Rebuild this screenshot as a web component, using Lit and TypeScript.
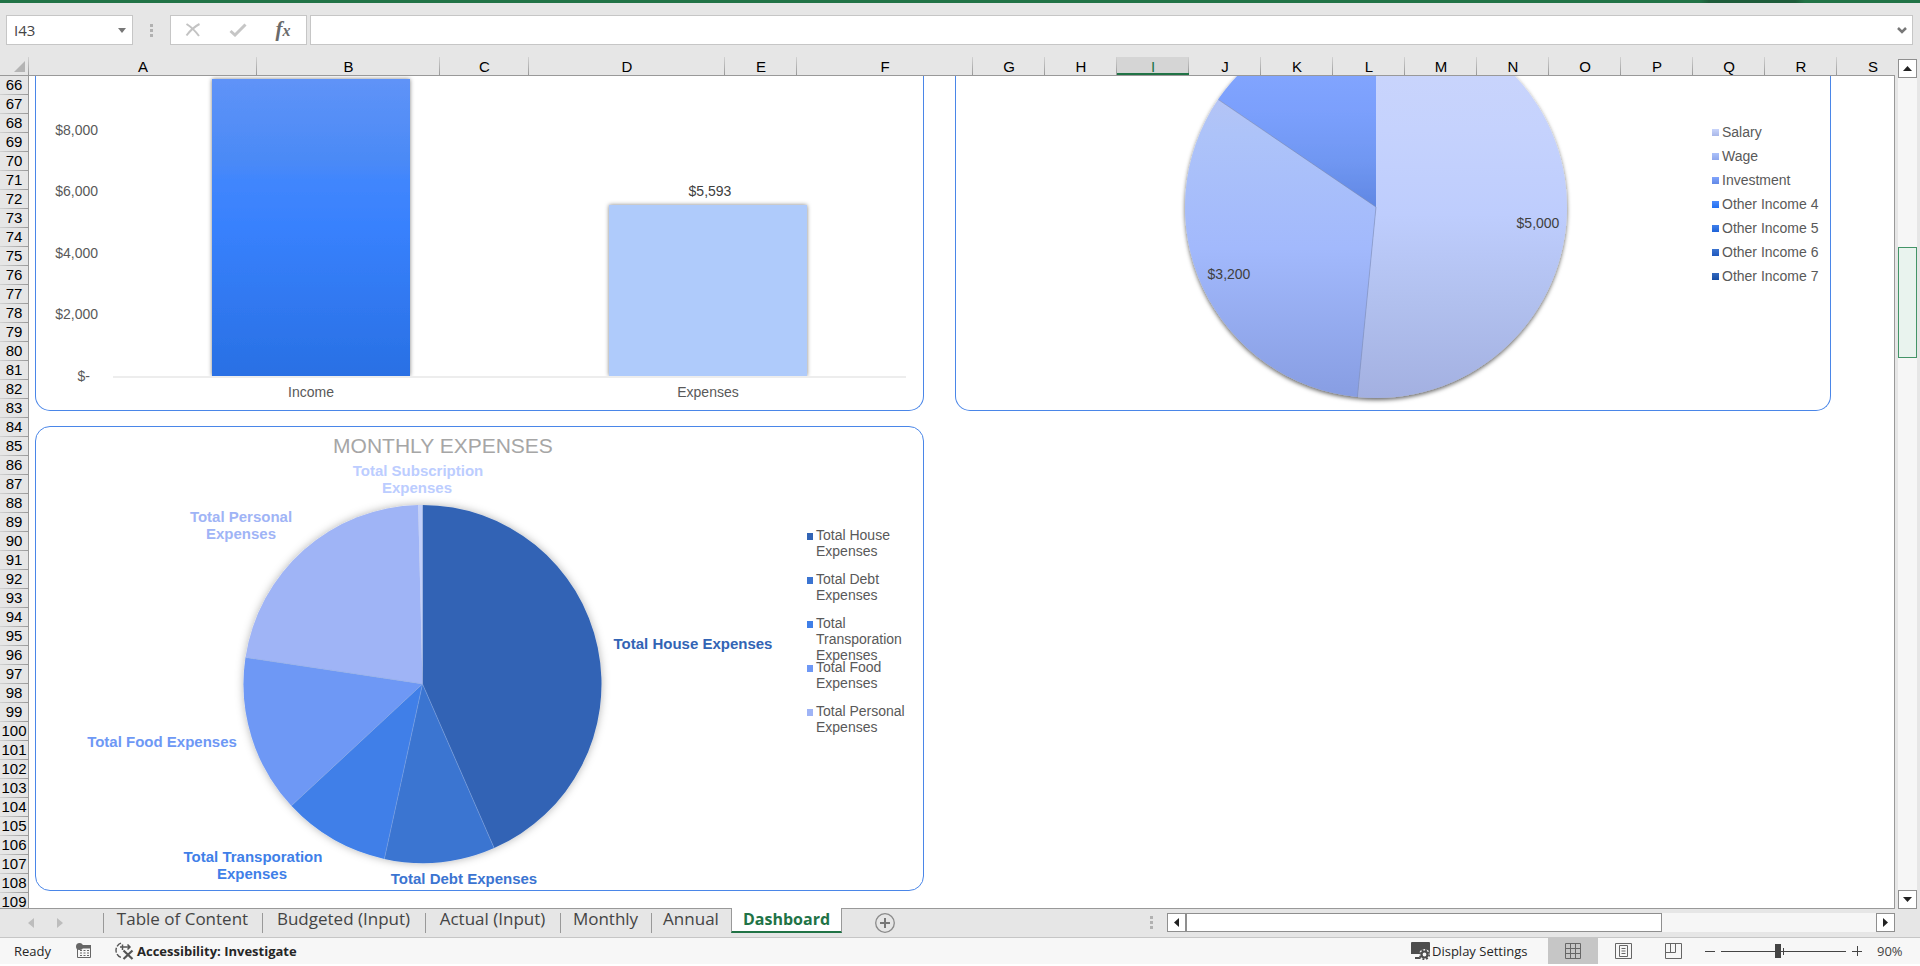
import { LitElement, html, svg, css } from "lit";
import { customElement } from "lit/decorators.js";
import { styleMap } from "lit/directives/style-map.js";

const COLUMNS: [string, number][] = [
  ["A", 228], ["B", 183], ["C", 89], ["D", 196], ["E", 72], ["F", 176],
  ...("GHIJKLMNOPQRS".split("").map((c) => [c, 72]) as [string, number][]),
];
const ROWS = Array.from({ length: 44 }, (_, i) => 66 + i);
const SELECTED_COLUMN = "I";

const TABS: [string, number][] = [
  ["Table of Content", 159],
  ["Budgeted (Input)", 163],
  ["Actual (Input)", 135],
  ["Monthly", 91],
  ["Annual", 80],
  ["Dashboard", 111],
];

/** Wedge from angle a to angle b, in degrees clockwise from twelve o'clock. */
function wedge(cx: number, cy: number, r: number, a: number, b: number) {
  const at = (deg: number) => {
    const t = (deg * Math.PI) / 180;
    return `${(cx + r * Math.sin(t)).toFixed(2)} ${(cy - r * Math.cos(t)).toFixed(2)}`;
  };
  return `M${cx} ${cy}L${at(a)}A${r} ${r} 0 ${b - a > 180 ? 1 : 0} 1 ${at(b)}Z`;
}

@customElement("income-expense-chart")
class IncomeExpenseChart extends LitElement {
  static styles = css`
    :host { display: block; }
    .plot { display: block; font: 14px "Liberation Sans", Arial, sans-serif; }
    .axis { fill: #595959; }
    .value { fill: #404040; }
    .end { text-anchor: end; }
    .mid { text-anchor: middle; }
  `;
  render() {
    const ticks: [string, number][] = [["$8,000", 135], ["$6,000", 196], ["$4,000", 258], ["$2,000", 319]];
    return html`
      <svg class="plot" width="887" height="334" viewBox="36 76 887 334" role="img" aria-label="Income and expenses">
        <defs>
          <linearGradient id="inc" x1="0" y1="0" x2="0" y2="1">
            <stop offset="0" stop-color="#5f93f8" />
            <stop offset=".27" stop-color="#4b8af6" />
            <stop offset=".34" stop-color="#4186fd" />
            <stop offset=".5" stop-color="#3881fd" />
            <stop offset="1" stop-color="#2970e4" />
          </linearGradient>
          <filter id="sh" x="-10%" y="-10%" width="120%" height="120%">
            <feDropShadow dx="0" dy="0" stdDeviation="2" flood-color="#000" flood-opacity=".5" />
          </filter>
          <clipPath id="floor"><rect x="36" y="60" width="887" height="316" /></clipPath>
        </defs>
        <rect x="113" y="376" width="793" height="2" fill="#ededed" />
        <g clip-path="url(#floor)">
          <rect x="212" y="79" width="198" height="297" fill="url(#inc)" filter="url(#sh)" />
          <rect x="609" y="205" width="198" height="171" fill="#afcbfb" filter="url(#sh)" />
        </g>
        ${ticks.map(([t, y]) => svg`<text class="axis end" x="98" y=${y}>${t}</text>`)}
        <text class="axis end" x="90" y="381">$-</text>
        <text class="axis mid" x="311" y="397">Income</text>
        <text class="axis mid" x="708" y="397">Expenses</text>
        <text class="value mid" x="710" y="196">$5,593</text>
      </svg>
    `;
  }
}

const legendStyles = css`
  .legend {
    list-style: none;
    margin: 0;
    padding: 0;
    font: 14px/16px "Liberation Sans", Arial, sans-serif;
    color: #595959;
  }
  .swatch { flex: none; width: 7px; height: 7px; }
`;

@customElement("income-source-chart")
class IncomeSourceChart extends LitElement {
  static styles = [
    legendStyles,
    css`
      :host { display: flex; }
      .plot { display: block; flex: none; font: 14px "Liberation Sans", Arial, sans-serif; fill: #404040; }
      .legend { padding-top: 44px; }
      .entry { display: flex; align-items: center; gap: 3px; height: 24px; white-space: nowrap; }
      .mid { text-anchor: middle; }
    `,
  ];
  render() {
    const legend: [string, string, string][] = [
      ["Salary", "#c8d4fb", "#a9b7e8"],
      ["Wage", "#abc1fa", "#8fa7ec"],
      ["Investment", "#80a4fd", "#6289e5"],
      ["Other Income 4", "#4c8bfb", "#216ff0"],
      ["Other Income 5", "#3f80ec", "#1f63d8"],
      ["Other Income 6", "#3c74d0", "#1f58bd"],
      ["Other Income 7", "#346abf", "#174da4"],
    ];
    return html`
      <svg class="plot" width="756" height="334" viewBox="956 76 756 334" role="img" aria-label="Income by source">
        <defs>
          <linearGradient id="sal" gradientUnits="userSpaceOnUse" x1="0" y1="15" x2="0" y2="399">
            <stop offset="0" stop-color="#ccd6fb" />
            <stop offset=".3" stop-color="#c5d2fd" />
            <stop offset=".52" stop-color="#becdfd" />
            <stop offset=".75" stop-color="#b1c0ee" />
            <stop offset="1" stop-color="#a3b0e1" />
          </linearGradient>
          <linearGradient id="wag" gradientUnits="userSpaceOnUse" x1="0" y1="99" x2="0" y2="399">
            <stop offset="0" stop-color="#b4c4f5" />
            <stop offset=".12" stop-color="#adc3f9" />
            <stop offset=".5" stop-color="#a2b9fc" />
            <stop offset="1" stop-color="#879de2" />
          </linearGradient>
          <linearGradient id="inv" gradientUnits="userSpaceOnUse" x1="0" y1="76" x2="0" y2="207">
            <stop offset="0" stop-color="#81a4fe" />
            <stop offset=".3" stop-color="#7a9ffc" />
            <stop offset=".65" stop-color="#7097f2" />
            <stop offset="1" stop-color="#6087e3" />
          </linearGradient>
          <filter id="sh" x="-10%" y="-10%" width="120%" height="120%">
            <feDropShadow dx="0" dy="2" stdDeviation="2" flood-color="#000" flood-opacity=".6" />
          </filter>
        </defs>
        <g filter="url(#sh)">
          <path d=${wedge(1376, 207, 191, 0, 185.57)} fill="url(#sal)" />
          <path d=${wedge(1376, 207, 191, 185.57, 304.3)} fill="url(#wag)" />
          <path d=${wedge(1376, 207, 191, 304.3, 360)} fill="url(#inv)" />
        </g>
        <path d="M1376 207L1357.4 397M1376 207L1218.2 99.500" stroke="#7f8fbe" stroke-opacity=".6" fill="none" />
        <text class="mid" x="1538" y="228">$5,000</text>
        <text class="mid" x="1229" y="279">$3,200</text>
      </svg>
      <ul class="legend">
        ${legend.map(
          ([name, a, b]) => html`<li class="entry">
            <span class="swatch" style=${styleMap({ background: `linear-gradient(${a}, ${b})` })}></span>${name}
          </li>`
        )}
      </ul>
    `;
  }
}

@customElement("monthly-expenses-chart")
class MonthlyExpensesChart extends LitElement {
  static styles = [
    legendStyles,
    css`
      :host { display: flex; }
      .plot { display: block; flex: none; font: bold 15px "Liberation Sans", Arial, sans-serif; text-anchor: middle; }
      .title { font-size: 21px; font-weight: normal; fill: #a6a6a6; }
      .legend { padding-top: 100px; }
      .entry { display: flex; gap: 3px; height: 44px; }
      .swatch { margin-top: 6px; width: 6px; }
      .name { width: 91px; }
    `,
  ];
  render() {
    const slices: [string, number, number][] = [
      ["#3264b5", 0, 156.4],
      ["#3b74d1", 156.4, 192.3],
      ["#3f7fe8", 192.3, 227.1],
      ["#6e98f5", 227.1, 278.5],
      ["#9fb4f6", 278.5, 358.6],
      ["#c2d0fb", 358.6, 360],
    ];
    const labels: [string, number, number, string][] = [
      ["Total Subscription", 418, 476, "#bccdff"],
      ["Expenses", 417, 493, "#bccdff"],
      ["Total Personal", 241, 522, "#9fb4f6"],
      ["Expenses", 241, 539, "#9fb4f6"],
      ["Total House Expenses", 693, 649, "#3264b5"],
      ["Total Food Expenses", 162, 747, "#6e98f5"],
      ["Total Transporation", 253, 862, "#3f7fe8"],
      ["Expenses", 252, 879, "#3f7fe8"],
      ["Total Debt Expenses", 464, 884, "#3b74d1"],
    ];
    const legend: [string, string][] = [
      ["Total House Expenses", "#3264b5"],
      ["Total Debt Expenses", "#3b74d1"],
      ["Total Transporation Expenses", "#3f7fe8"],
      ["Total Food Expenses", "#6e98f5"],
      ["Total Personal Expenses", "#9fb4f6"],
    ];
    return html`
      <svg class="plot" width="771" height="463" viewBox="36 427 771 463" role="img" aria-label="Monthly expenses">
        <defs>
          <filter id="sh" x="-10%" y="-10%" width="120%" height="120%">
            <feDropShadow dx="0" dy="0" stdDeviation="4" flood-color="#000" flood-opacity=".3" />
          </filter>
        </defs>
        <text class="title" x="443" y="453">MONTHLY EXPENSES</text>
        <g filter="url(#sh)">
          ${slices.map(([c, a, b]) => svg`<path d=${wedge(422.5, 684, 179, a, b)} fill=${c} />`)}
        </g>
        ${slices.slice(1, 5).map(
          ([, a]) => svg`<path d=${wedge(422.5, 684, 179, a, a)} fill="none" stroke="#8fb0e8" stroke-opacity=".25" />`
        )}
        ${labels.map(([t, x, y, c]) => svg`<text x=${x} y=${y} fill=${c}>${t}</text>`)}
      </svg>
      <ul class="legend">
        ${legend.map(
          ([name, c]) => html`<li class="entry">
            <span class="swatch" style=${styleMap({ background: c })}></span><span class="name">${name}</span>
          </li>`
        )}
      </ul>
    `;
  }
}

@customElement("app-root")
class AppRoot extends LitElement {
  static styles = css`
    :host {
      display: flex;
      flex-direction: column;
      box-sizing: border-box;
      height: 100vh;
      padding-bottom: 2px;
      background: #fff;
      overflow: hidden;
      font-family: "Open Sans", "Noto Sans", sans-serif;
      color: #262626;
    }
    button, input { font: inherit; color: inherit; margin: 0; }
    button { padding: 0; border: 0; background: none; }
    svg { display: block; }

    .ribbon { flex: none; height: 3px; background: linear-gradient(90deg, #217346 88.5%, #1e5c3a 89% 93.5%, #217346 94%); }

    .formula-bar { flex: none; display: flex; height: 30px; padding: 12px 7px 12px 6px; background: #e6e6e6; }
    .box { display: flex; align-items: center; box-sizing: border-box; border: 1px solid #c6c6c6; background: #fff; }
    .name-box { width: 127px; }
    .name-input { flex: 1; min-width: 0; border: 0; outline: 0; padding: 0 0 0 7px; background: none; font-size: 15px; color: #444; }
    .name-drop { padding-right: 6px; }
    .grip { display: grid; gap: 2px; align-content: center; }
    .grip i { width: 3px; height: 3px; background: #b1b1b1; }
    .formula-bar .grip { width: 37px; justify-content: center; }
    .fx-box { width: 137px; margin-right: 3px; padding: 0 8px 0 7px; justify-content: space-between; }
    .fx-box button { width: 30px; height: 26px; display: grid; place-items: center; }
    .fx-box .fx { font: italic bold 21px/24px "Liberation Serif", serif; color: #6a6a6a; display: block; }
    .fx small { font-size: 16px; }
    .formula { flex: 1; }
    .formula-input { flex: 1; border: 0; outline: 0; background: none; height: 24px; padding: 0 6px; }
    .expand { padding-right: 5px; }

    .main { flex: 1; min-height: 0; display: flex; background: #e6e6e6; }
    .sheet { flex: 1; min-width: 0; display: flex; flex-direction: column; border-bottom: 1px solid #999; font-family: "Liberation Sans", Arial, sans-serif; color: #000; }
    .col-heads { flex: none; display: flex; height: 18px; border-bottom: 1px solid #999; overflow: hidden; font-size: 15px; line-height: 19px; text-align: center; }
    .corner { flex: none; width: 29px; box-sizing: border-box; padding: 4px 4px 0 14px; background: linear-gradient(#d2d2d2, #999) right / 1px 100% no-repeat; }
    .col { flex: none; background: linear-gradient(#d2d2d2, #999) right / 1px 100% no-repeat; }
    .col.selected { height: 16px; background-color: #d5d5d5; border-bottom: 3px solid #217346; color: #217346; }
    .body { flex: 1; min-height: 0; display: flex; }
    .row-heads { flex: none; width: 28px; border-right: 1px solid #999; overflow: hidden; font-size: 15px; line-height: 18px; text-align: center; }
    .row { height: 19px; background: linear-gradient(90deg, #d2d2d2, #999) bottom / 100% 1px no-repeat; }
    .cells {
      flex: 1; min-width: 0; box-sizing: border-box; overflow: hidden; background: #fff; border-right: 1px solid #999;
      display: grid; grid-template-columns: max-content max-content; grid-template-rows: max-content max-content;
      column-gap: 31px; row-gap: 15px; padding-left: 6px;
    }
    .card { border: 1px solid #4a86e8; border-radius: 15px; overflow: hidden; }
    .card.cut { border-top: 0; border-top-left-radius: 0; border-top-right-radius: 0; }
    .card.wide { width: 887px; }
    .card.source { width: 874px; }

    .vscroll { flex: none; width: 19px; margin: 2px 3px 0; display: flex; flex-direction: column; }
    .sb-btn { flex: none; width: 19px; height: 19px; border: 1px solid #8f8f8f; background: #fff; display: grid; place-items: center; }
    .track { flex: 1; background: #f6f6f6; display: flex; }
    .vscroll .track { flex-direction: column; }
    .vthumb { box-sizing: border-box; height: 111px; margin-top: 169px; border: 1px solid #439467; background: #e9f3ee; }

    .tab-bar { flex: none; display: flex; height: 28px; background: #e6e6e6; }
    .tab-nav { display: flex; align-items: center; width: 103px; box-sizing: border-box; padding-left: 28px; gap: 23px; }
    .tab { height: 24px; display: flex; justify-content: center; font-size: 17px; line-height: 20px; color: #444; white-space: nowrap; background: linear-gradient(#999, #999) left 4px / 1px 20px no-repeat; }
    .tab.active { margin-top: -1px; height: 25px; box-sizing: border-box; padding-top: 1px; background: #fff; border: solid #999; border-width: 0 1px; border-bottom: 2px solid #217346; color: #217346; font-size: 16px; font-weight: bold; }
    .add { width: 20px; margin-left: 33px; display: grid; place-items: center; }
    .hscroll { margin-left: auto; display: flex; align-items: flex-start; width: 770px; padding: 4px 25px 0 0; box-sizing: border-box; }
    .hscroll .grip { width: 3px; height: 19px; margin-right: 14px; }
    .hscroll .track { height: 19px; }
    .hthumb { box-sizing: border-box; width: 69%; height: 19px; border: 1px solid #8f8f8f; background: #fff; }

    .status { flex: none; display: flex; align-items: center; height: 26px; border-top: 1px solid #c6c6c6; background: #f7f7f7; font-size: 13px; white-space: nowrap; }
    .ready { width: 76px; box-sizing: border-box; padding-left: 14px; }
    .macro { margin-right: 22px; }
    .access { display: flex; align-items: center; gap: 3px; font-weight: bold; }
    .display { display: flex; align-items: center; gap: 1px; margin-left: auto; width: 137px; }
    .view { width: 50px; height: 26px; display: grid; place-items: center; }
    .view.on { background: #c6c6c6; }
    .zoom { display: flex; align-items: center; gap: 6px; margin-left: 7px; }
    .slider { appearance: none; width: 125px; height: 16px; background: linear-gradient(#444, #444) 62px 50% / 1px 7px no-repeat, linear-gradient(#444, #444) 0 50% / 100% 1px no-repeat; }
    .slider::-webkit-slider-thumb { appearance: none; width: 6px; height: 14px; background: #444; }
    .pct { width: 43px; margin-left: 9px; text-align: left; color: #444; }
  `;

  render() {
    return html`
      <div class="ribbon"></div>
      <div class="formula-bar">
        <div class="box name-box">
          <input class="name-input" aria-label="Name box" .value=${"I43"} />
          <button class="name-drop" aria-label="Open name list">
            <svg width="8" height="5"><path d="M0 0H8L4 5Z" fill="#777" /></svg>
          </button>
        </div>
        <div class="grip"><i></i><i></i><i></i></div>
        <div class="box fx-box">
          <button aria-label="Cancel">
            <svg width="16" height="14" viewBox="0 0 16 14"><path d="M1.5 1Q8 5 14 13M14.5 1Q7 5 1.5 12.500" fill="none" stroke="#c3c3c3" stroke-width="2" /></svg>
          </button>
          <button aria-label="Enter">
            <svg width="18" height="14" viewBox="0 0 18 14"><path d="M1.500 8L6 12L16.500 1.500" fill="none" stroke="#c6c6c6" stroke-width="3" /></svg>
          </button>
          <button class="fx" aria-label="Insert function">f<small>x</small></button>
        </div>
        <div class="box formula">
          <input class="formula-input" aria-label="Formula" />
          <button class="expand" aria-label="Expand formula bar">
            <svg width="10" height="7"><path d="M1 1L5 5L9 1" fill="none" stroke="#777" stroke-width="2.500" /></svg>
          </button>
        </div>
      </div>

      <div class="main">
        <div class="sheet">
          <div class="col-heads">
            <div class="corner"><svg width="11" height="11"><path d="M11 0V11H0Z" fill="#b4b4b4" /></svg></div>
            ${COLUMNS.map(
              ([c, w]) => html`<div class=${c === SELECTED_COLUMN ? "col selected" : "col"} style=${styleMap({ width: `${w}px` })}>${c}</div>`
            )}
          </div>
          <div class="body">
            <div class="row-heads">${ROWS.map((r) => html`<div class="row">${r}</div>`)}</div>
            <div class="cells">
              <div class="card cut wide"><income-expense-chart></income-expense-chart></div>
              <div class="card cut source"><income-source-chart></income-source-chart></div>
              <div class="card wide"><monthly-expenses-chart></monthly-expenses-chart></div>
            </div>
          </div>
        </div>
        <div class="vscroll">
          <button class="sb-btn" aria-label="Scroll up"><svg width="9" height="5"><path d="M4.500 0L9 5H0Z" fill="#222" /></svg></button>
          <div class="track"><div class="vthumb"></div></div>
          <button class="sb-btn" aria-label="Scroll down"><svg width="9" height="5"><path d="M4.500 5L9 0H0Z" fill="#222" /></svg></button>
        </div>
      </div>

      <div class="tab-bar">
        <div class="tab-nav">
          <button aria-label="Previous sheets"><svg width="6" height="10"><path d="M6 0V10L0 5Z" fill="#bdbdbd" /></svg></button>
          <button aria-label="Next sheets"><svg width="6" height="10"><path d="M0 0V10L6 5Z" fill="#bdbdbd" /></svg></button>
        </div>
        ${TABS.map(
          ([t, w], i) => html`<button class=${i === 5 ? "tab active" : "tab"} style=${styleMap({ width: `${w}px` })}>${t}</button>`
        )}
        <button class="add" aria-label="New sheet">
          <svg width="20" height="20"><circle cx="10" cy="10" r="9.300" fill="none" stroke="#8a8a8a" stroke-width="1.300" /><path d="M5 10H15M10 5V15" stroke="#777" stroke-width="2" /></svg>
        </button>
        <div class="hscroll">
          <div class="grip"><i></i><i></i><i></i></div>
          <button class="sb-btn" aria-label="Scroll left"><svg width="5" height="9"><path d="M5 0V9L0 4.500Z" fill="#222" /></svg></button>
          <div class="track"><div class="hthumb"></div></div>
          <button class="sb-btn" aria-label="Scroll right"><svg width="5" height="9"><path d="M0 0V9L5 4.500Z" fill="#222" /></svg></button>
        </div>
      </div>

      <div class="status">
        <span class="ready">Ready</span>
        <button class="macro" aria-label="Record macro">
          <svg width="16" height="16" viewBox="0 0 16 16">
            <path d="M1.500 5V14.500H14.500V2.500H5" fill="none" stroke="#666" />
            <path d="M6 2H15V5.500H6Z" fill="#666" />
            <circle cx="3.500" cy="3.500" r="3.500" fill="#666" />
            <path d="M4 7.500H13M4 10H13M4 12.500H13" stroke="#666" stroke-dasharray="2 1.500" />
          </svg>
        </button>
        <button class="access">
          <svg width="20" height="18" viewBox="0 0 20 18" fill="none" stroke="#555">
            <path d="M7 1.200A7.500 7.500 0 0 0 7.500 15.500" stroke-width="1.400" stroke-dasharray="5 1.500" />
            <path d="M6 5H16M8.500 2.500V8M13.500 2.500L16 5L13.500 7.500" stroke-width="1.500" />
            <path d="M9.500 8.500L18.500 17M18.500 8.500L9.500 17" stroke-width="2.200" />
          </svg>
          Accessibility: Investigate
        </button>
        <button class="display">
          <svg width="20" height="18" viewBox="0 0 20 18">
            <path d="M1 0H18Q19 0 19 1V12H0V1Q0 0 1 0ZM8 12V15H4V17H10Z" fill="#4d4d4d" />
            <circle cx="13.500" cy="12.500" r="5.500" fill="#f7f7f7" />
            <circle cx="13.500" cy="12.500" r="3" fill="none" stroke="#4d4d4d" stroke-width="2.200" />
            <circle cx="13.500" cy="12.500" r="4.700" fill="none" stroke="#4d4d4d" stroke-width="1.800" stroke-dasharray="1.900 1.800" />
          </svg>
          Display Settings
        </button>
        <button class="view on" aria-label="Normal view">
          <svg width="16" height="16"><path d="M.5.5H15.500V15.500H.5ZM5.500 0V16M10.500 0V16M0 5.500H16M0 10.500H16" fill="none" stroke="#666" /></svg>
        </button>
        <button class="view" aria-label="Page layout">
          <svg width="17" height="16"><path d="M.5.5H16.500V15.500H.5ZM4.500 2.500H12.500V13.500H4.500ZM6.500 5.500H10.500M6.500 8H10.500M6.500 10.500H10.500" fill="none" stroke="#666" /></svg>
        </button>
        <button class="view" aria-label="Page break preview">
          <svg width="17" height="16"><path d="M.5.5H16.500V15.500H.5ZM5.500 0V9.500M10.500 0V9.500H0" fill="none" stroke="#666" /></svg>
        </button>
        <div class="zoom">
          <button aria-label="Zoom out"><svg width="10" height="10"><path d="M0 5.500H10" stroke="#444" /></svg></button>
          <input class="slider" type="range" min="0" max="100" .value=${"45"} aria-label="Zoom" />
          <button aria-label="Zoom in"><svg width="10" height="10"><path d="M0 5.500H10M5.500 0V10" stroke="#444" /></svg></button>
          <button class="pct">90%</button>
        </div>
      </div>
    `;
  }
}
